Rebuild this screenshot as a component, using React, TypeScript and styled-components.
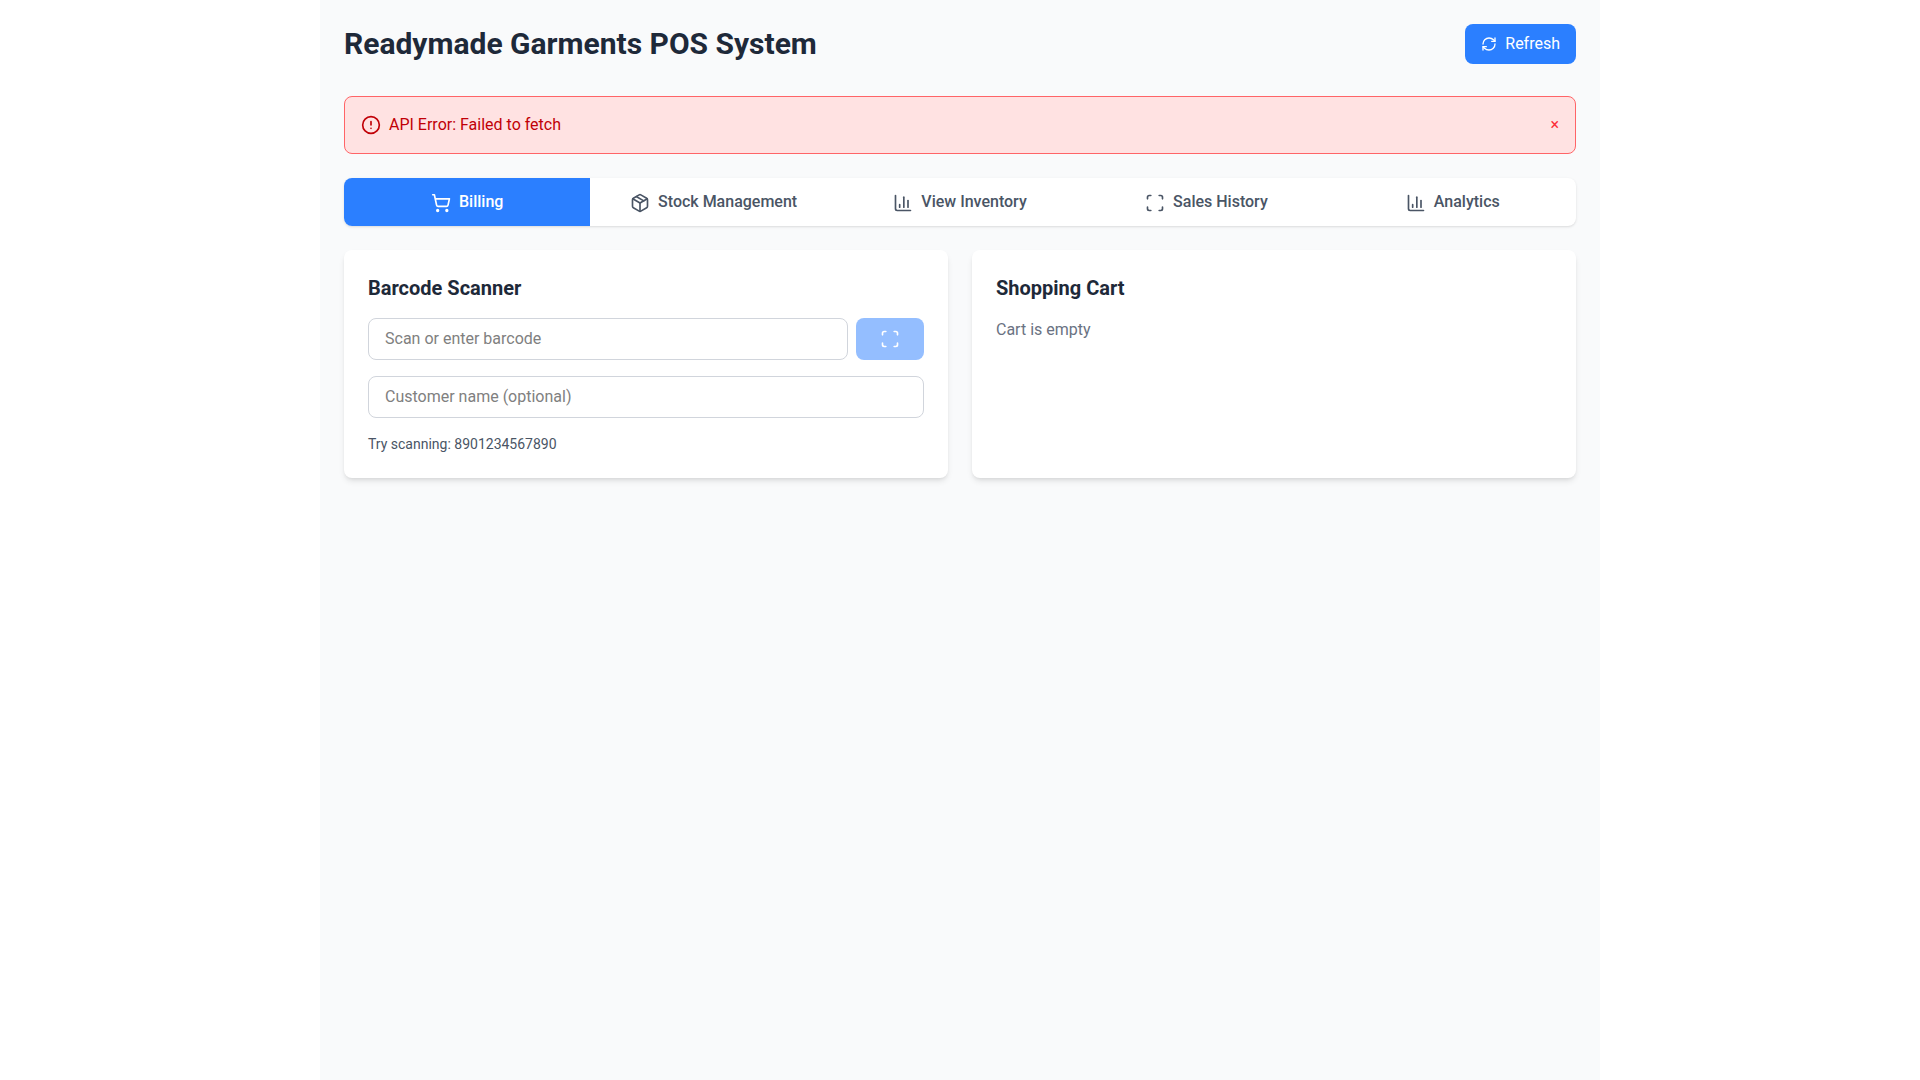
import React from 'react';
import styled, { createGlobalStyle } from 'styled-components';
import { ChartColumn, CircleAlert, Package, RefreshCw, Scan, ShoppingCart } from 'lucide-react';

const GlobalStyle = createGlobalStyle`
  html, body {
    margin: 0;
    padding: 0;
    background-color: #fff;
  }
  * {
    box-sizing: border-box;
  }
  body {
    font-family: Roboto, "Liberation Sans", sans-serif;
    font-size: 16px;
    line-height: 24px;
  }
  svg {
    vertical-align: middle;
  }
`;

const Page = styled.div`
  width: 1280px;
  min-height: 1080px;
  margin: 0 auto;
  padding: 24px;
  background-color: #f9fafb;
`;

const Header = styled.header`
  display: flex;
  justify-content: space-between;
  align-items: center;
  margin-bottom: 32px;
`;

const Title = styled.h1`
  margin: 0;
  font-size: 30px;
  line-height: 36px;
  font-weight: 700;
  color: #1e2939;
`;

const RefreshButton = styled.button`
  display: flex;
  align-items: center;
  gap: 8px;
  padding: 8px 16px;
  border: none;
  border-radius: 8px;
  background-color: #2b7fff;
  color: #fff;
  font-family: inherit;
  font-size: 16px;
  line-height: 24px;
  cursor: pointer;
`;

const Alert = styled.div`
  display: flex;
  justify-content: space-between;
  align-items: center;
  padding: 16px;
  margin-bottom: 24px;
  background-color: #ffe2e2;
  border: 1px solid #ff6467;
  border-radius: 8px;
  color: #c10007;
`;

const AlertMessage = styled.div`
  display: flex;
  align-items: center;
  gap: 8px;
`;

const AlertClose = styled.button`
  padding: 0;
  border: none;
  background: transparent;
  color: #fb2c36;
  font-family: inherit;
  font-size: 16px;
  line-height: 24px;
  cursor: pointer;
`;

const Tabs = styled.nav`
  display: flex;
  margin-bottom: 24px;
  background-color: #fff;
  border-radius: 8px;
  overflow: hidden;
  box-shadow: 0 1px 3px 0 rgba(0, 0, 0, 0.1), 0 1px 2px -1px rgba(0, 0, 0, 0.1);
`;

const Tab = styled.button<{ $active?: boolean }>`
  flex: 1;
  height: 48px;
  padding: 12px 24px;
  border: none;
  background-color: ${({ $active }) => ($active ? '#2b7fff' : 'transparent')};
  color: ${({ $active }) => ($active ? '#fff' : '#4a5565')};
  font-family: inherit;
  font-size: 16px;
  line-height: 24px;
  font-weight: 500;
  text-align: center;
  cursor: pointer;

  svg {
    display: inline-block;
    margin-right: 8px;
  }
`;

const Columns = styled.div`
  display: grid;
  grid-template-columns: 1fr 1fr;
  gap: 24px;
`;

const Card = styled.section`
  padding: 24px;
  background-color: #fff;
  border-radius: 8px;
  box-shadow: 0 4px 6px -1px rgba(0, 0, 0, 0.1), 0 2px 4px -2px rgba(0, 0, 0, 0.1);
`;

const CardTitle = styled.h2`
  margin: 0 0 16px;
  font-size: 20px;
  line-height: 28px;
  font-weight: 700;
  color: #1e2939;
`;

const ScanRow = styled.div`
  display: flex;
  gap: 8px;
  margin-bottom: 16px;
`;

const TextInput = styled.input`
  flex: 1;
  width: 100%;
  padding: 8px 16px;
  background-color: #fff;
  border: 1px solid #d1d5dc;
  border-radius: 8px;
  font-family: inherit;
  font-size: 16px;
  line-height: 24px;
  color: #1e2939;

  &::placeholder {
    color: #808080;
    opacity: 1;
  }
`;

const ScanButton = styled.button`
  display: flex;
  justify-content: center;
  align-items: center;
  width: 68px;
  flex-shrink: 0;
  border: none;
  border-radius: 8px;
  background-color: #2b7fff;
  color: #fff;
  opacity: 0.5;
`;

const Hint = styled.p`
  margin: 16px 0 0;
  font-size: 14px;
  line-height: 20px;
  color: #4a5565;
`;

const Empty = styled.p`
  margin: 0;
  color: #6a7282;
`;

const tabs = [
  { label: 'Billing', Icon: ShoppingCart, active: true },
  { label: 'Stock Management', Icon: Package },
  { label: 'View Inventory', Icon: ChartColumn },
  { label: 'Sales History', Icon: Scan },
  { label: 'Analytics', Icon: ChartColumn },
];

const App: React.FC = () => {
  return (
    <>
      <GlobalStyle />
      <Page>
        <Header>
          <Title>Readymade Garments POS System</Title>
          <RefreshButton>
            <RefreshCw size={16} />
            Refresh
          </RefreshButton>
        </Header>

        <Alert>
          <AlertMessage>
            <CircleAlert size={20} />
            API Error: Failed to fetch
          </AlertMessage>
          <AlertClose>×</AlertClose>
        </Alert>

        <Tabs>
          {tabs.map(({ label, Icon, active }) => (
            <Tab key={label} $active={active}>
              <Icon size={20} />
              {label}
            </Tab>
          ))}
        </Tabs>

        <Columns>
          <Card>
            <CardTitle>Barcode Scanner</CardTitle>
            <ScanRow>
              <TextInput placeholder="Scan or enter barcode" />
              <ScanButton disabled>
                <Scan size={20} />
              </ScanButton>
            </ScanRow>
            <TextInput placeholder="Customer name (optional)" />
            <Hint>Try scanning: 8901234567890</Hint>
          </Card>

          <Card>
            <CardTitle>Shopping Cart</CardTitle>
            <Empty>Cart is empty</Empty>
          </Card>
        </Columns>
      </Page>
    </>
  );
};

export default App;
